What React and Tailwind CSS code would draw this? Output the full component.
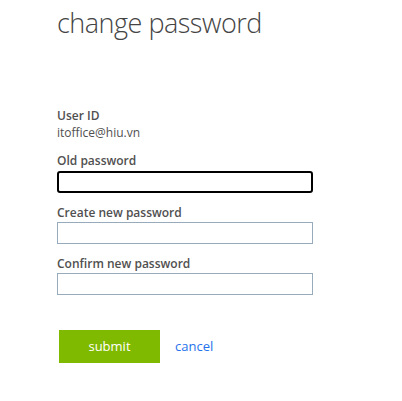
export default function App() {
  return (
    <div className="min-h-[401px] w-[402px] bg-white pl-[57px] font-['Segoe_UI','Open_Sans',sans-serif] text-[#444]">
      <h1 className="pt-[5px] text-[27px] font-light leading-[36px] tracking-[-0.5px] text-[#444]">change password</h1>

      <div className="mt-[67px] flex flex-col">
        <div className="text-[12px] font-semibold leading-[16px] text-[#505050]">User ID</div>
        <div className="mt-[1px] text-[12px] leading-[16px] text-[#505050]">itoffice@hiu.vn</div>

        <label className="mt-[12px] text-[12px] font-semibold leading-[16px] text-[#505050]">Old password</label>
        <input
          type="password"
          className="mt-[2px] h-[22px] w-[256px] rounded-[3px] border-2 border-black bg-white outline-none"
        />

        <label className="mt-[12px] text-[12px] font-semibold leading-[16px] text-[#505050]">Create new password</label>
        <input
          type="password"
          className="mt-[1px] h-[22px] w-[256px] border border-[#98abbd] bg-white outline-none"
        />

        <label className="mt-[12px] text-[12px] font-semibold leading-[16px] text-[#505050]">Confirm new password</label>
        <input
          type="password"
          className="mt-[1px] h-[22px] w-[256px] border border-[#98abbd] bg-white outline-none"
        />

        <div className="mt-[35px] flex items-center gap-[15px]">
          <button type="button" className="ml-[2px] h-[33px] w-[101px] bg-[#7fba00] text-[13px] leading-none text-white">
            submit
          </button>
          <a href="#" className="text-[13px] text-[#2672ec]">cancel</a>
        </div>
      </div>
    </div>
  );
}
